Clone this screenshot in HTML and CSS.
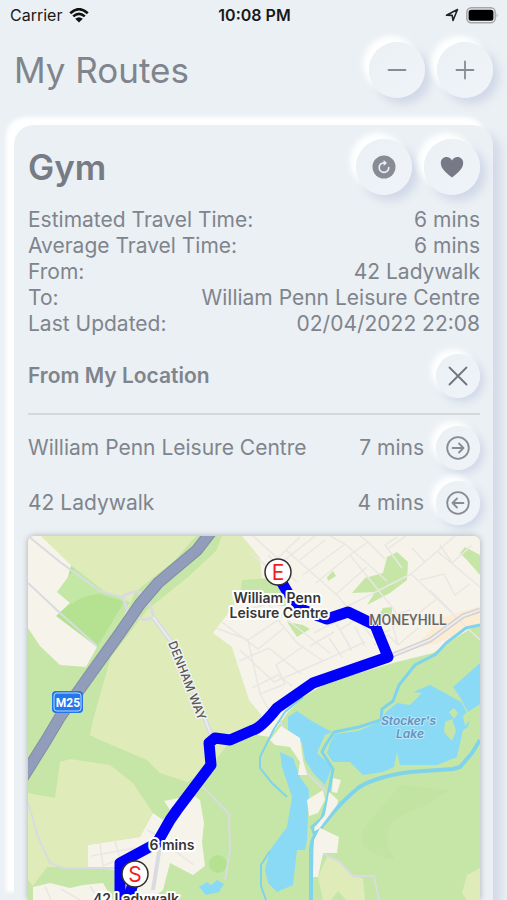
FILE: index.html
```html
<!DOCTYPE html>
<html lang="en">
<head>
    <meta charset="UTF-8">
    <meta name="viewport" content="width=device-width, initial-scale=1.0">
    <title>My Routes</title>
    <link rel="stylesheet" href="styles.css">
</head>
<body>
    <div class="status-bar">
        <div class="status-left">
            <span>Carrier</span>
            <svg class="wifi" viewBox="0 0 20 15">
                <path d="M1.2 5.2Q10-2.8 18.8 5.2M4.2 8.4Q10 3.2 15.8 8.4" fill="none" stroke="#111" stroke-width="2.6"/>
                <path d="M6.2 10.8Q10 7.6 13.8 10.8L10 14.6Z" fill="#111"/>
            </svg>
        </div>
        <span class="clock">10:08 PM</span>
        <div class="status-right">
            <svg class="location" viewBox="0 0 14 14"><path d="M1.5 7.2L12.5 1.5L8 12.5L7.2 7.4Z" fill="none" stroke="#222" stroke-width="1.6" stroke-linejoin="round"/></svg>
            <svg class="battery" viewBox="0 0 33 17">
                <rect x="0.8" y="0.8" width="28.4" height="15" rx="4.5" fill="none" stroke="#a5a8ab" stroke-width="1.5"/>
                <rect x="2.6" y="2.8" width="24.8" height="11" rx="2.5" fill="#000"/>
                <path d="M30.6 6Q32.6 8.3 30.6 10.6Z" fill="#a5a8ab"/>
            </svg>
        </div>
    </div>

    <header class="page-header">
        <h1>My Routes</h1>
        <div class="buttons">
            <button class="round-btn" aria-label="Remove route">
                <svg width="20" height="20" viewBox="0 0 20 20"><path d="M1.5 10h17"/></svg>
            </button>
            <button class="round-btn" aria-label="Add route">
                <svg width="20" height="20" viewBox="0 0 20 20"><path d="M1.5 10h17M10 1.5v17"/></svg>
            </button>
        </div>
    </header>

    <main class="card">
        <div class="card-header">
            <h2>Gym</h2>
            <div class="buttons">
                <button class="round-btn" aria-label="Refresh">
                    <svg width="24" height="24" viewBox="0 0 24 24">
                        <circle cx="12" cy="12" r="11.5" fill="#888b94" stroke="none"/>
                        <path d="M12 7.8A4.8 4.8 0 1 0 16.8 12.6" stroke="#ebf0f4" stroke-width="1.7"/>
                        <path d="M11.6 5L15 8L11.6 11Z" fill="#ebf0f4" stroke="none"/>
                    </svg>
                </button>
                <button class="round-btn" aria-label="Favourite">
                    <svg width="24" height="24" viewBox="0 0 24 24"><path d="M12 22.5C6 18 .8 13.4.8 8C.8 4.5 3.3 2 6.5 2C9 2 11 3.4 12 5.6C13 3.4 15 2 17.5 2C20.7 2 23.2 4.5 23.2 8C23.2 13.4 18 18 12 22.5Z" fill="#777a86" stroke="none"/></svg>
                </button>
            </div>
        </div>

        <dl class="details">
            <div><dt>Estimated Travel Time:</dt><dd>6 mins</dd></div>
            <div><dt>Average Travel Time:</dt><dd>6 mins</dd></div>
            <div><dt>From:</dt><dd>42 Ladywalk</dd></div>
            <div><dt>To:</dt><dd>William Penn Leisure Centre</dd></div>
            <div><dt>Last Updated:</dt><dd>02/04/2022 22:08</dd></div>
        </dl>

        <div class="row location-row">
            <h3>From My Location</h3>
            <button class="round-btn small" aria-label="Close">
                <svg width="20" height="20" viewBox="0 0 20 20"><path d="M1.5 1.5l17 17M18.5 1.5l-17 17" stroke="#70747c"/></svg>
            </button>
        </div>
        <div class="row">
            <span class="place">William Penn Leisure Centre</span>
            <span>7 mins</span>
            <button class="round-btn small" aria-label="Go to William Penn Leisure Centre">
                <svg width="24" height="24" viewBox="0 0 24 24"><circle cx="12" cy="12" r="10.8"/><path d="M6.5 12h11M13 7.5l4.5 4.5l-4.5 4.5"/></svg>
            </button>
        </div>
        <div class="row">
            <span class="place">42 Ladywalk</span>
            <span>4 mins</span>
            <button class="round-btn small" aria-label="Go to 42 Ladywalk">
                <svg width="24" height="24" viewBox="0 0 24 24"><circle cx="12" cy="12" r="10.8"/><path d="M17.5 12h-11M11 7.5l-4.5 4.5l4.5 4.5"/></svg>
            </button>
        </div>

        <svg class="map" viewBox="28 536 452 364" preserveAspectRatio="xMidYMin slice" role="img" aria-label="Route map">
            <rect x="28" y="536" width="452" height="364" fill="#c5e6a6"/>

            <!-- fields -->
            <g fill="#dfebb9">
                <path d="M41 536H245L262 560L262 720L230 742L207 770L187 782L160 773L147 760L100 740L90 735L93 720L110 660L122 620L130 602L105 592L71 565Z"/>
                <path d="M28 793L55 798L60 762L70 759L110 765L133 783L153 813L140 837L88 845V867H47L33 886L28 880Z"/>
                <path d="M327 857L340 862L353 877L363 878L365 900H346L338 891L331 900H323L318 877Z"/>
                <path d="M480 868L467 875L462 893L467 900H480Z"/>
            </g>
            <path d="M196 536L175 560L135 592L123 622L90 678L105 665L147 610L188 577L216 551L222 536Z" fill="#c5e6a6"/>
            <path d="M71 567L105 592L124 602L97 647L56 616L70 603L57 592L68 577Z" fill="#b4e291"/>
            <path d="M75 569L105 592L122 601L100 594Q82 595 72 604L57 592L68 577Z" fill="#c3e8a6"/>
            <path d="M375 815Q340 850 395 860Q370 820 425 806L450 790L400 785Z" fill="#bce19b" opacity=".3"/>

            <!-- built-up areas -->
            <g fill="#f6f3eb">
                <path d="M28 536H41L71 565L68 577L57 592L70 603L56 616L97 647L86 667L60 665L40 646L28 628Z"/>
                <path d="M242 536H480V623L457 637L433 653L393 663L327 683L303 697L288 712L270 737L257 735L263 717L249 700L237 663L232 647L213 633L233 607L240 600L262 580L260 558Z"/>
                <path d="M164 801L193 795L200 800L204 823L202 842L205 866L193 875L170 863L163 890L150 900H120L117 870L88 867V845L140 837L153 813L163 820L170 810Z"/>
                <path d="M33 887L50 883L70 888L83 885L103 883L113 900H33Z"/>
            </g>
            <path d="M480 606L440 618L415 648L435 644L480 624Z" fill="#fbecd3"/>

            <!-- parks -->
            <g fill="#c5e6a6">
                <path d="M387 557L397 552L408 562L407 580L390 593L367 605L375 592L352 593L365 578L383 573Z"/>
                <path d="M460 553L465 547L480 555V575L467 560Z"/>
                <path d="M242 580L270 578L290 590L290 607L254 602L240 597Z"/>
                <path d="M287 622L303 625L310 629L297 637Z"/>
                <path d="M327 577L333 571L336 576L328 581Z"/>
                <path d="M383 608L392 607V615L378 617Z"/>
                <circle cx="218" cy="864" r="9" fill="#b4e291"/>
            </g>

            <!-- residential streets -->
            <g fill="none" stroke="#e9e7e4" stroke-width="1.5">
                <path d="M250 553L268 567L300 537M286 550L337 595L372 637L390 630M253 536L282 562L315 536M268 555L297 582M300 560L325 540M303 575L345 544L330 536M316 583L350 555L396 612M345 544L387 581M350 555L368 542L360 536M368 542L385 559M335 595L367 567M346 607L411 574L480 640"/>
                <path d="M411 574L455 536M402 568L385 545L397 537M425 562L412 548M437 551L480 587M420 580L444 574L455 595L470 584M430 590L452 612M420 612L438 598M389 548L406 536M440 545L452 563L472 545"/>
                <path d="M216 628L248 640L278 620L297 643L323 661L365 642M222 622L258 649L284 628M229 615L267 604L330 653M240 650L274 682L323 661M239 661L269 648L301 674M248 640L260 694L285 684L276 665L304 646M252 688L278 675L292 686M260 694L270 712M314 633L335 622L350 646M310 646L334 632M342 657L329 638M352 651L340 630L362 615M365 646L355 627M374 645L388 635L398 645L418 628M398 645L390 616L410 610"/>
                <path d="M100 843L103 866L133 853M91 856L135 848M115 841L120 859M147 830L160 837M175 851L194 865M45 886L51 900M61 889L80 900M90 886L99 900"/>
            </g>

            <!-- roads -->
            <g fill="none" stroke="#d8dce0" stroke-width="2">
                <path d="M28 536L60 562L100 591L122 597M28 583L60 613L97 646M28 802L38 837L50 863L63 868H115"/>
                <path d="M202 786L229 814L230 850L225 880"/>
                <path d="M160 846L153 890" stroke-width="4"/>
                <path d="M280 721L307 773L327 792M320 838Q316 852 324 854L340 862L353 876L374 876L379 900"/>
                <path d="M122 597Q131 591 139 592L150 605L154 617Q145 622 135 617Q126 612 124 600Z" stroke-width="3"/>
                <path d="M153 617L173 644L192 686L212 737" stroke-width="5"/>
                <path d="M153 617L173 644L192 686L212 737" stroke="#e9ebec"/>
                <path d="M388 657L430 640L463 616L480 610" stroke="#d1d1d3" stroke-width="5"/>
                <path d="M388 657L430 640L463 616L480 610" stroke="#eeecea"/>
            </g>
            <path d="M214 528L197 550L158 583L140 604L120 633L92 672L60 717L47 739L22 779" fill="none" stroke="#838da9" stroke-width="12"/>
            <path d="M214 528L197 550L158 583L140 604L120 633L92 672L60 717L47 739L22 779" fill="none" stroke="#929dbb" stroke-width="10"/>

            <!-- water -->
            <g fill="#8bdaf5">
                <path d="M330 743L335 734L358 731L382 721L385 713L397 703L410 705L422 693L413 692L430 685L443 692L463 703L453 687L480 663V720L463 730L457 757L437 765L400 765L397 752L394 767L383 772L363 775L350 762L333 762L327 753Z"/>
                <path d="M288 717L297 711L310 720L332 732L325 735L317 753L332 767L325 785L313 773L305 760L302 743L288 730Z"/>
                <path d="M280 752L293 758L300 777L309 790L307 840L305 850L297 850L293 885L277 892L268 883L265 870L270 850L287 827L292 797L282 767Z"/>
                <path d="M199 887L207 882L211 885L217 880L224 884L219 892L206 895Z"/>
            </g>
            <g fill="#c5e6a6">
                <path d="M445 722L452 719L456 731L452 741L444 732ZM449 712L454 708L458 713L454 719ZM463 716L468 711L470 720L465 726Z"/>
                <path d="M453 685L465 709L470 718L466 735L480 730V704L468 712Z"/>
            </g>
            <g fill="none" stroke="#80d3ec" stroke-width="3">
                <path d="M480 740L472 753L460 767L453 769L410 772Q374 777 358 788Q340 803 327 820L317 832Q311 841 311 850L311 900" stroke-width="4"/>
                <path d="M480 625L466 628L446 643L436 654L415 665L399 685L393 701L382 709L381 720L359 727L334 732L325 746L322 752L333 769L327 801L322 818L312 827L315 836"/>
                <path d="M303 697L285 712L274 729L260 757L260 768L272 783L287 797M270 851L261 865L261 886L266 900" stroke-width="2"/>
            </g>
            <g fill="#f6f3eb">
                <path d="M270 740L281 726L300 738L303 760L307 775L298 775L300 762L290 747L275 745Z"/>
                <path d="M307 800L323 790L325 800L318 813L309 816ZM329 792L338 800L337 805L319 829L314 831L315 827L325 815Z"/>
                <path d="M333 778L341 780L337 793L332 792Z"/>
                <path d="M320 828L339 837L337 853L323 853L318 877L313 877L314 840Z"/>
            </g>

            <!-- route -->
            <path class="route" d="M278 576L288 593L303 610L327 619L348 612L375 625L388 657L313 683L277 708Q261 728 253 730L230 740L215 738L209 743L211 765L177 810L170 820L157 843L120 863V900M135 876L127 905"/>

            <!-- labels -->
            <g class="road-sign">
                <rect x="52" y="691" width="31" height="22" rx="4" fill="#2476ea"/>
                <rect x="54" y="693" width="27" height="18" rx="3" fill="none" stroke="#b5daff"/>
                <text x="68" y="707">M25</text>
            </g>
            <path id="denham-way" d="M168 643L199 722" fill="none"/>
            <text class="road-name"><textPath href="#denham-way">DENHAM WAY</textPath></text>
            <text class="area-name" x="408" y="625">MONEYHILL</text>
            <text class="water-name"><tspan x="410" y="725">Stocker's</tspan> <tspan x="410" y="738">Lake</tspan></text>
            <text class="pin-name"><tspan x="279" y="603">William Penn</tspan> <tspan x="279" y="618">Leisure Centre</tspan></text>
            <text class="pin-name" x="172" y="850">6 mins</text>
            <text class="pin-name" x="136" y="904">42 Ladywalk</text>
            <g class="pin">
                <circle cx="278" cy="572" r="13"/>
                <text x="278" y="580">E</text>
                <circle cx="135" cy="874" r="13"/>
                <text x="135" y="882">S</text>
            </g>
        </svg>
    </main>
</body>
</html>
```

FILE: styles.css
```css
* {
    box-sizing: border-box;
}
body {
    margin: 0;
    height: 100vh;
    overflow: hidden;
    display: flex;
    flex-direction: column;
    background-color: #ebf0f4;
    color: #80848c;
    font-family: Inter, "Liberation Sans", sans-serif;
    font-size: 21px;
    line-height: 26px;
}
h1, h2, h3, dl, dd {
    margin: 0;
}
.status-bar {
    display: grid;
    grid-template-columns: 1fr auto 1fr;
    align-items: center;
    height: 30px;
    padding: 0 8px 0 10px;
    color: #17191b;
    font-size: 16px;
}
.status-left, .status-right {
    display: flex;
    align-items: center;
    gap: 7px;
}
.status-right {
    justify-content: flex-end;
}
.clock {
    font-weight: 600;
}
.wifi {
    width: 20px;
    height: 15px;
}
.location {
    width: 14px;
    height: 14px;
}
.battery {
    width: 33px;
    height: 17px;
}
.page-header {
    display: flex;
    justify-content: space-between;
    align-items: center;
    padding: 12px 14px 27px;
}
h1 {
    font-size: 35px;
    font-weight: 400;
}
.buttons {
    display: flex;
    gap: 12px;
}
.round-btn {
    display: flex;
    justify-content: center;
    align-items: center;
    flex: none;
    width: 56px;
    height: 56px;
    padding: 0;
    border: none;
    border-radius: 50%;
    background: linear-gradient(135deg, #ebf0f4, #f0f4f9);
    box-shadow: -6px -6px 6px #fff, 6px 6px 10px #d0d8e8;
    cursor: pointer;
}
.round-btn svg {
    fill: none;
    stroke: #888b91;
    stroke-width: 1.8;
    stroke-linecap: round;
    stroke-linejoin: round;
}
.small {
    width: 44px;
    height: 44px;
    box-shadow: -5px -5px 6px #fff, 4px 4px 8px #d0d8e8;
}
.card {
    flex: 1;
    min-height: 0;
    display: flex;
    flex-direction: column;
    margin: 0 14px;
    padding: 14px 13px 0 14px;
    border-radius: 20px 20px 0 0;
    background-color: #ebf0f4;
    box-shadow: -8px -8px 4px #fff, 8px 8px 10px #d3dae9;
}
.card-header {
    display: flex;
    justify-content: space-between;
    align-items: center;
}
h2 {
    font-size: 35px;
    font-weight: 600;
    color: #777b84;
}
.details {
    margin: 12px 0 17px;
}
.details div {
    display: flex;
    justify-content: space-between;
}
.row {
    display: flex;
    align-items: center;
    gap: 12px;
    margin-bottom: 11px;
}
.location-row {
    justify-content: space-between;
    padding-bottom: 15px;
    border-bottom: 2px solid #d4d8dc;
}
h3 {
    font-size: 21px;
    font-weight: 600;
}
.place {
    flex: 1;
}
.map {
    display: block;
    flex: 1;
    min-height: 0;
    width: 100%;
    border-radius: 6px 6px 0 0;
    box-shadow: 0 0 6px #a9adb1;
}
.map text {
    text-anchor: middle;
    paint-order: stroke;
    stroke-linejoin: round;
}
.route {
    fill: none;
    stroke: #0000fb;
    stroke-width: 11;
    stroke-linejoin: round;
}
.map .pin-name {
    fill: #363638;
    stroke: #fff;
    stroke-width: 4;
    font-size: 14px;
    font-weight: 600;
}
.map .area-name {
    fill: #67676a;
    stroke: #f6f3eb;
    stroke-width: 2;
    font-family: Roboto, sans-serif;
    font-size: 14px;
    font-weight: 500;
}
.map .road-name {
    text-anchor: start;
    fill: #55585c;
    stroke: #f2f3ed;
    stroke-width: 3;
    font-size: 12px;
    font-weight: 500;
}
.map .water-name {
    fill: #6593bd;
    stroke: #b9e6fa;
    stroke-width: 2;
    font-size: 12px;
    font-style: italic;
    font-weight: 600;
}
.map .road-sign text {
    fill: #fff;
    font-family: Roboto, sans-serif;
    font-size: 12px;
    font-weight: 700;
}
.pin circle {
    fill: #fff;
    stroke: #303030;
    stroke-width: 1.5;
}
.pin text {
    fill: #f21d24;
    font-size: 21px;
}
```
